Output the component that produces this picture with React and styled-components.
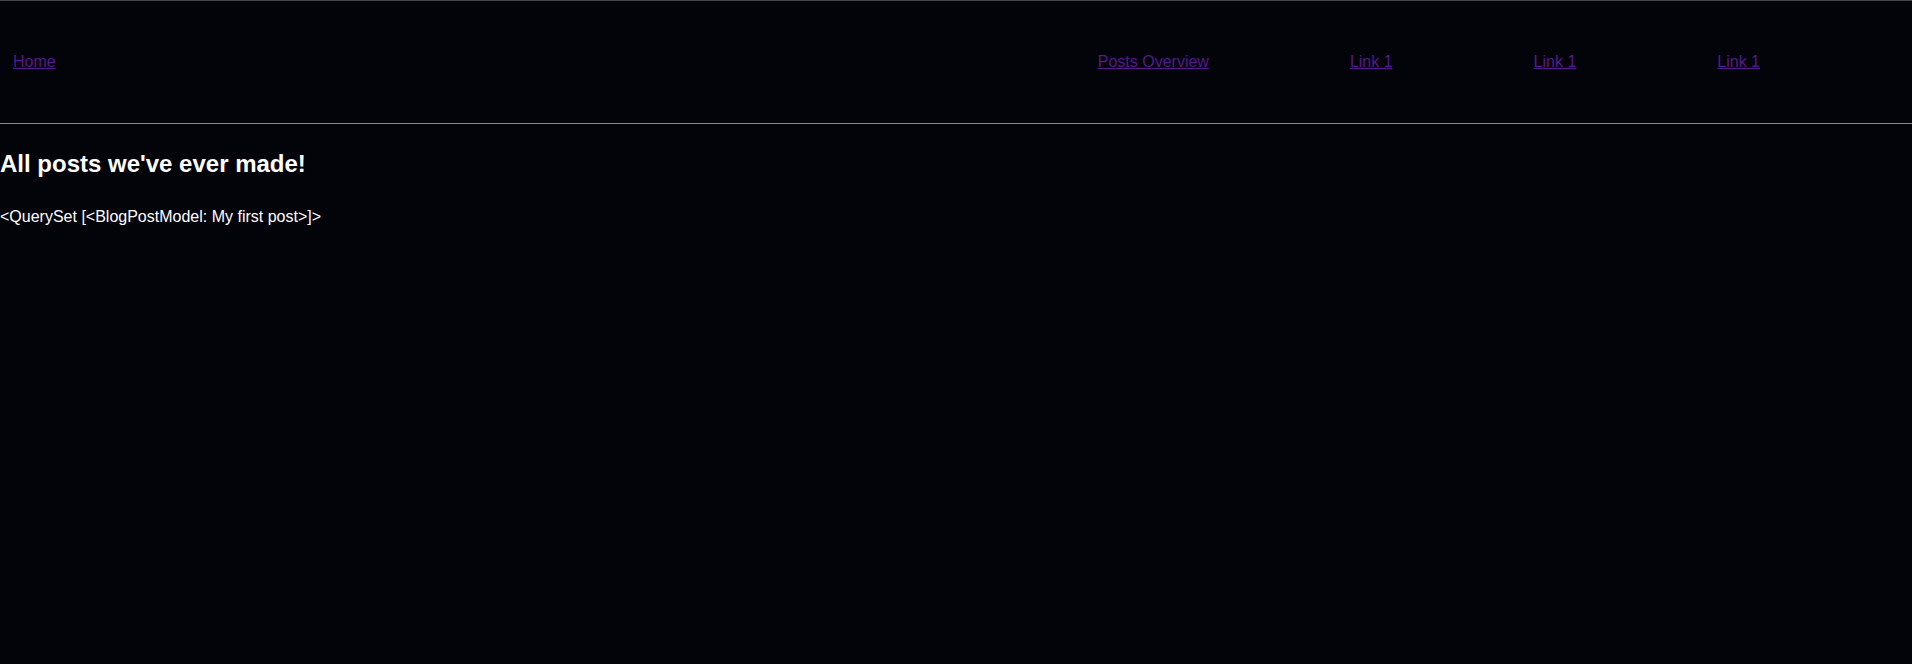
import React from "react";
import styled, { createGlobalStyle } from "styled-components";

const Global = createGlobalStyle`
  html, body {
    margin: 0;
    padding: 0;
    background: #03030a;
    color: #ffffff;
    font-family: "Liberation Sans", Arial, sans-serif;
    font-size: 16px;
  }
`;

const Page = styled.div`
  min-height: 664px;
  background: #03030a;
`;

const Header = styled.header`
  display: flex;
  align-items: flex-start;
  border-top: 1px solid #444448;
  padding: 52px 0 52px 13px;
  line-height: 18px;
`;

const NavList = styled.ul`
  display: flex;
  gap: 141px;
  list-style: none;
  margin: 0 0 0 auto;
  padding: 0 152px 0 0;
`;

const NavItem = styled.li`
  margin: 0;
  padding: 0;
`;

const NavLink = styled.a`
  color: #551a8b;
  text-decoration: underline;
`;

const Rule = styled.hr`
  margin: 0;
  border: none;
  height: 1px;
  background: #8a8a8a;
`;

const Title = styled.h2`
  margin: 26px 0 29.5px;
  font-size: 24px;
  font-weight: bold;
  line-height: normal;
  color: #ffffff;
`;

const Body = styled.p`
  margin: 0;
  font-size: 16px;
  line-height: normal;
  color: #ffffff;
`;

const links = ["Posts Overview", "Link 1", "Link 1", "Link 1"];

export default function App() {
  return (
    <Page>
      <Global />
      <Header>
        <NavLink href="#">Home</NavLink>
        <NavList>
          {links.map((l, i) => (
            <NavItem key={i}>
              <NavLink href="#">{l}</NavLink>
            </NavItem>
          ))}
        </NavList>
      </Header>
      <Rule />
      <Title>All posts we've ever made!</Title>
      <Body>{"<QuerySet [<BlogPostModel: My first post>]>"}</Body>
    </Page>
  );
}
